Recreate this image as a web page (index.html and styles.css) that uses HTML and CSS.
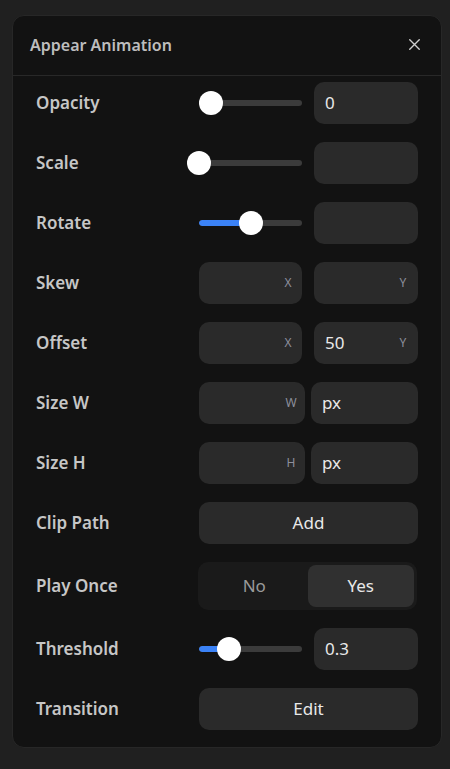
FILE: index.html
```html
<!DOCTYPE html>
<html>
<head>
<meta charset="utf-8">
<link rel="stylesheet" href="styles.css">
</head>
<body>
<div class="panel">
  <div class="header">
    <span class="title">Appear Animation</span>
    <svg class="close" width="11" height="11" viewBox="0 0 11 11"><path d="M0.75 0.75L10.25 10.25M10.25 0.75L0.75 10.25" stroke="#cfcfcf" stroke-width="1.4" stroke-linecap="round"/></svg>
  </div>
  <div class="content">
    <div class="row">
      <div class="label">Opacity</div>
      <div class="ctrl two">
        <div class="slider"><div class="track"></div><div class="thumb" style="left:0px"></div></div>
        <div class="input">0</div>
      </div>
    </div>
    <div class="row">
      <div class="label">Scale</div>
      <div class="ctrl two">
        <div class="slider"><div class="track"></div><div class="thumb" style="left:-12px"></div></div>
        <div class="input"></div>
      </div>
    </div>
    <div class="row">
      <div class="label">Rotate</div>
      <div class="ctrl two">
        <div class="slider"><div class="track"><div class="fill" style="width:52px"></div></div><div class="thumb" style="left:40px"></div></div>
        <div class="input"></div>
      </div>
    </div>
    <div class="row">
      <div class="label">Skew</div>
      <div class="ctrl two">
        <div class="input"><span class="val"></span><span class="suffix">X</span></div>
        <div class="input"><span class="val"></span><span class="suffix sy">Y</span></div>
      </div>
    </div>
    <div class="row">
      <div class="label">Offset</div>
      <div class="ctrl two">
        <div class="input"><span class="val"></span><span class="suffix">X</span></div>
        <div class="input"><span class="val">50</span><span class="suffix sy">Y</span></div>
      </div>
    </div>
    <div class="row">
      <div class="label">Size W</div>
      <div class="ctrl size">
        <div class="input"><span class="val"></span><span class="suffix">W</span></div>
        <div class="input">px</div>
      </div>
    </div>
    <div class="row">
      <div class="label">Size H</div>
      <div class="ctrl size">
        <div class="input"><span class="val"></span><span class="suffix">H</span></div>
        <div class="input">px</div>
      </div>
    </div>
    <div class="row">
      <div class="label">Clip Path</div>
      <div class="ctrl"><div class="button">Add</div></div>
    </div>
    <div class="row tall">
      <div class="label">Play Once</div>
      <div class="ctrl">
        <div class="segment">
          <div class="seg">No</div>
          <div class="seg active">Yes</div>
        </div>
      </div>
    </div>
    <div class="row">
      <div class="label">Threshold</div>
      <div class="ctrl two">
        <div class="slider"><div class="track"><div class="fill" style="width:30px"></div></div><div class="thumb" style="left:18px"></div></div>
        <div class="input">0.3</div>
      </div>
    </div>
    <div class="row">
      <div class="label">Transition</div>
      <div class="ctrl"><div class="button">Edit</div></div>
    </div>
  </div>
</div>
</body>
</html>
```
FILE: styles.css
```css
* { box-sizing: border-box; }
html, body { margin: 0; padding: 0; }
body {
  background: #202020;
  width: 450px;
  height: 769px;
  font-family: "Noto Sans", "Open Sans", sans-serif;
  padding: 15px 8px 0 12px;
}
.panel {
  width: 430px;
  height: 733px;
  background: #121212;
  border: 1px solid #272727;
  border-radius: 12px;
  display: flex;
  flex-direction: column;
}
.header {
  height: 60px;
  border-bottom: 1px solid #282828;
  display: flex;
  align-items: center;
  justify-content: space-between;
  padding: 0 21px 2px 17px;
}
.title {
  color: #bdbdbd;
  font-size: 16px;
  font-weight: 600;
}
.close { display: block; }
.content {
  padding: 6px 23px 0 23px;
  display: flex;
  flex-direction: column;
  gap: 18px;
}
.row {
  display: flex;
  align-items: center;
  height: 42px;
}
.row.tall { height: 48px; }
.label {
  flex: 0 0 163px;
  color: #c6c6c6;
  font-size: 17px;
  font-weight: 600;
  padding-bottom: 2px;
}
.ctrl {
  flex: 1;
  height: 100%;
}
.ctrl.two {
  display: grid;
  grid-template-columns: 103px 104px;
  column-gap: 12px;
}
.ctrl.size {
  display: grid;
  grid-template-columns: 106px 107px;
  column-gap: 6px;
}
.slider {
  position: relative;
  display: flex;
  align-items: center;
}
.track {
  width: 100%;
  height: 6px;
  border-radius: 3px;
  background: #3b3b3b;
  overflow: hidden;
}
.fill {
  height: 100%;
  background: #3b82f6;
  border-radius: 3px;
}
.thumb {
  position: absolute;
  top: 9px;
  width: 24px;
  height: 24px;
  border-radius: 50%;
  background: #ffffff;
}
.input {
  background: #2a2a2a;
  border-radius: 10px;
  height: 42px;
  display: flex;
  align-items: center;
  justify-content: space-between;
  padding: 0 7px 2px 11px;
  color: #e8e8e8;
  font-size: 17px;
}
.suffix {
  color: #8d8f9c;
  font-size: 12px;
  width: 14px;
  text-align: center;
}
.suffix.sy { margin-right: 1px; }
.button {
  background: #2a2a2a;
  border-radius: 10px;
  height: 42px;
  display: flex;
  align-items: center;
  justify-content: center;
  padding-bottom: 2px;
  color: #e8e8e8;
  font-size: 17px;
}
.segment {
  background: #1a1a1a;
  border-radius: 10px;
  height: 48px;
  padding: 3px;
  display: grid;
  grid-template-columns: 1fr 1fr;
  width: 219px;
  margin-left: -1px;
}
.seg {
  display: flex;
  align-items: center;
  justify-content: center;
  padding-bottom: 2px;
  color: #9a9a9a;
  font-size: 17px;
  border-radius: 8px;
}
.seg.active {
  background: #303030;
  color: #e8e8e8;
}
```
